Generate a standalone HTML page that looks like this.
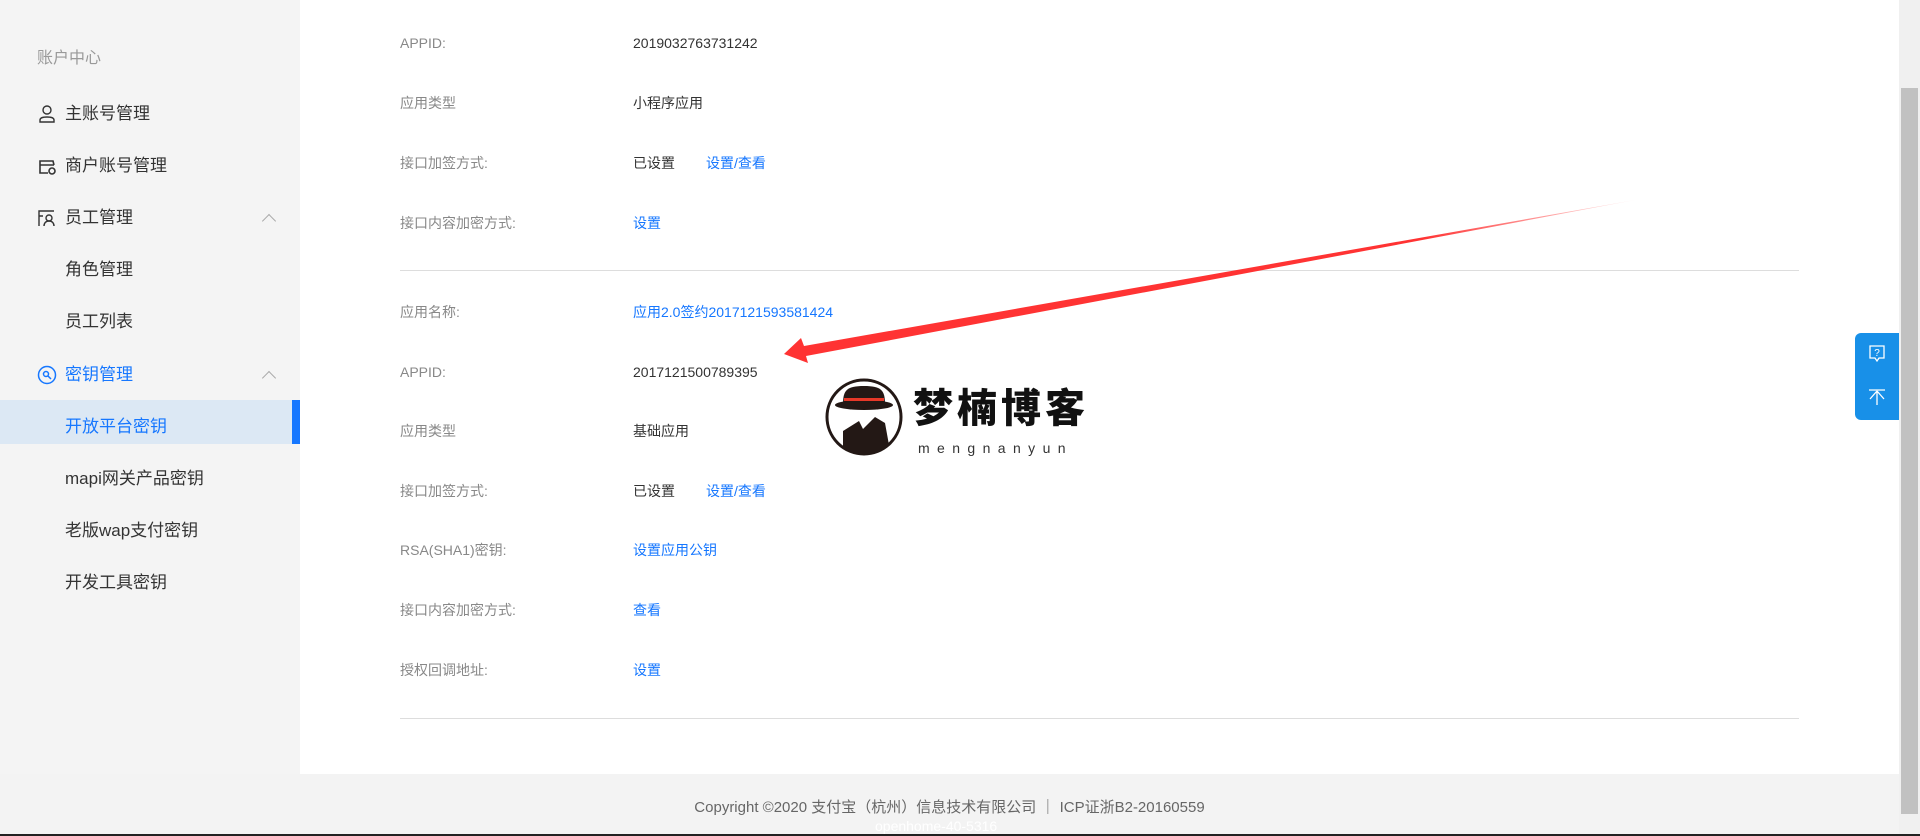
<!DOCTYPE html>
<html><head><meta charset="utf-8"><style>
*{margin:0;padding:0;box-sizing:border-box}
body{width:1920px;height:836px;overflow:hidden;background:#f3f3f3;font-family:"Liberation Sans","Noto Sans CJK SC",sans-serif;position:relative}
.side{position:absolute;left:0;top:0;width:300px;height:774px;background:#f4f4f4}
.main{position:absolute;left:300px;top:0;width:1599px;height:774px;background:#fff}
.si{position:absolute;left:65px;font-size:17px;color:#333;line-height:20px}
.ic{position:absolute;left:37px}
.chev{position:absolute;left:264px;width:10px;height:10px;border-left:1px solid #aaa;border-top:1px solid #aaa;transform:rotate(45deg)}
.lb{position:absolute;left:400px;font-size:14px;color:#888;line-height:18px}
.v{position:absolute;left:633px;font-size:14px;color:#333;line-height:18px}
.a{color:#1677ff}
.hr{position:absolute;left:400px;width:1399px;height:1px;background:#ddd}
</style></head><body>
<div class="side"></div>
<div class="main"></div>
<div style="position:absolute;left:0;top:400px;width:300px;height:44px;background:#dce8f4"></div>
<div style="position:absolute;left:292px;top:400px;width:8px;height:44px;background:#1677ff"></div>
<div class="si" style="left:37px;top:49px;color:#999;font-size:16px">账户中心</div>
<svg class="ic" style="top:104px" width="20" height="20" viewBox="0 0 20 20" fill="none" stroke="#333" stroke-width="1.4"><circle cx="10" cy="6" r="4"/><path d="M3 18v-2c0-2 2-3 7-3s7 1 7 3v2z"/></svg>
<div class="si" style="top:104px">主账号管理</div>
<svg class="ic" style="top:156px" width="20" height="20" viewBox="0 0 20 20" fill="none" stroke="#333" stroke-width="1.6"><path d="M3 9V5h13l1 4M3 9v8h8M3 9h14"/><circle cx="15" cy="15" r="3"/></svg>
<div class="si" style="top:156px">商户账号管理</div>
<svg class="ic" style="top:208px" width="20" height="20" viewBox="0 0 20 20" fill="none" stroke="#333" stroke-width="1.4"><path d="M2 18V3h15M2 8h4"/><circle cx="12" cy="10" r="3"/><path d="M7 18c0-3 2-5 5-5s5 2 5 5"/></svg>
<div class="si" style="top:208px">员工管理</div>
<div class="chev" style="top:216px"></div>
<div class="si" style="top:260px">角色管理</div>
<div class="si" style="top:312px">员工列表</div>
<svg class="ic" style="top:365px" width="20" height="20" viewBox="0 0 20 20" fill="none" stroke="#1677ff" stroke-width="1.5"><circle cx="10" cy="10" r="8.5"/><circle cx="9" cy="9" r="2.5"/><path d="M11 11l3 3"/></svg>
<div class="si" style="top:365px;color:#1677ff">密钥管理</div>
<div class="chev" style="top:373px"></div>
<div class="si" style="top:417px;color:#1677ff">开放平台密钥</div>
<div class="si" style="top:469px">mapi网关产品密钥</div>
<div class="si" style="top:521px">老版wap支付密钥</div>
<div class="si" style="top:573px">开发工具密钥</div>

<div class="lb" style="top:34px">APPID:</div><div class="v" style="top:34px">2019032763731242</div>
<div class="lb" style="top:94px">应用类型</div><div class="v" style="top:94px">小程序应用</div>
<div class="lb" style="top:154px">接口加签方式:</div><div class="v" style="top:154px">已设置<span class="a" style="margin-left:31px">设置/查看</span></div>
<div class="lb" style="top:214px">接口内容加密方式:</div><div class="v a" style="top:214px">设置</div>
<div class="hr" style="top:270px"></div>
<div class="lb" style="top:303px">应用名称:</div><div class="v a" style="top:303px">应用2.0签约2017121593581424</div>
<div class="lb" style="top:363px">APPID:</div><div class="v" style="top:363px">2017121500789395</div>
<div class="lb" style="top:422px">应用类型</div><div class="v" style="top:422px">基础应用</div>
<div class="lb" style="top:482px">接口加签方式:</div><div class="v" style="top:482px">已设置<span class="a" style="margin-left:31px">设置/查看</span></div>
<div class="lb" style="top:541px">RSA(SHA1)密钥:</div><div class="v a" style="top:541px">设置应用公钥</div>
<div class="lb" style="top:601px">接口内容加密方式:</div><div class="v a" style="top:601px">查看</div>
<div class="lb" style="top:661px">授权回调地址:</div><div class="v a" style="top:661px">设置</div>
<div class="hr" style="top:718px"></div>

<svg style="position:absolute;left:0;top:0" width="1920" height="836">
<defs><linearGradient id="g" x1="784" y1="354" x2="1635" y2="200" gradientUnits="userSpaceOnUse"><stop offset="0" stop-color="#f33"/><stop offset="0.75" stop-color="#f33"/><stop offset="1" stop-color="#f33" stop-opacity="0.1"/></linearGradient></defs>
<path d="M784 354L801 338L804 346L1635 200L806 356L808 363Z" fill="url(#g)"/>
<circle cx="864" cy="417" r="37" fill="#fff" stroke="#231815" stroke-width="3"/>
<path d="M843 404c0-14 4-18 21-18s21 4 21 18z" fill="#231815"/>
<ellipse cx="864" cy="405" rx="29" ry="5" fill="#231815"/>
<rect x="844" y="398" width="40" height="3" fill="#e83828"/>
<path d="M843 431l16-10 4 8 12-12 10 6 4 22a37 37 0 0 1-46 3z" fill="#231815"/>
</svg>
<div style="position:absolute;left:913px;top:383px;font-size:40px;font-weight:900;color:#111;letter-spacing:4px;font-family:'Noto Sans CJK SC',sans-serif;line-height:44px">梦楠博客</div>
<div style="position:absolute;left:918px;top:440px;font-size:14px;color:#333;letter-spacing:7.4px;line-height:16px">mengnanyun</div>

<div style="position:absolute;left:1855px;top:333px;width:44px;height:87px;background:#1890e8;border-radius:6px 0 0 6px"></div>
<svg style="position:absolute;left:1866px;top:343px" width="22" height="70" fill="none" stroke="#fff" stroke-width="1.3"><path d="M4 3h14v12h-5l-2 3-2-3H4z"/><text x="11" y="13" font-size="10" fill="#fff" stroke="none" text-anchor="middle" font-family="Liberation Sans">?</text><path d="M3 47h16M11 48v14M11 48l-7 8M11 48l7 8"/></svg>
<div style="position:absolute;left:1899px;top:0;width:21px;height:836px;background:#f0f0f0"></div>
<div style="position:absolute;left:1901px;top:88px;width:17px;height:726px;background:#c1c1c1"></div>
<div style="position:absolute;left:0;top:796px;width:1899px;text-align:center;font-size:15px;color:#666">Copyright ©2020 支付宝（杭州）信息技术有限公司 ｜ ICP证浙B2-20160559</div>
<div style="position:absolute;left:875px;top:818px;font-size:14px;color:#fff">openhome-40-5316</div>
<div style="position:absolute;left:0;top:834px;width:1920px;height:2px;background:#222"></div>
</body></html>
